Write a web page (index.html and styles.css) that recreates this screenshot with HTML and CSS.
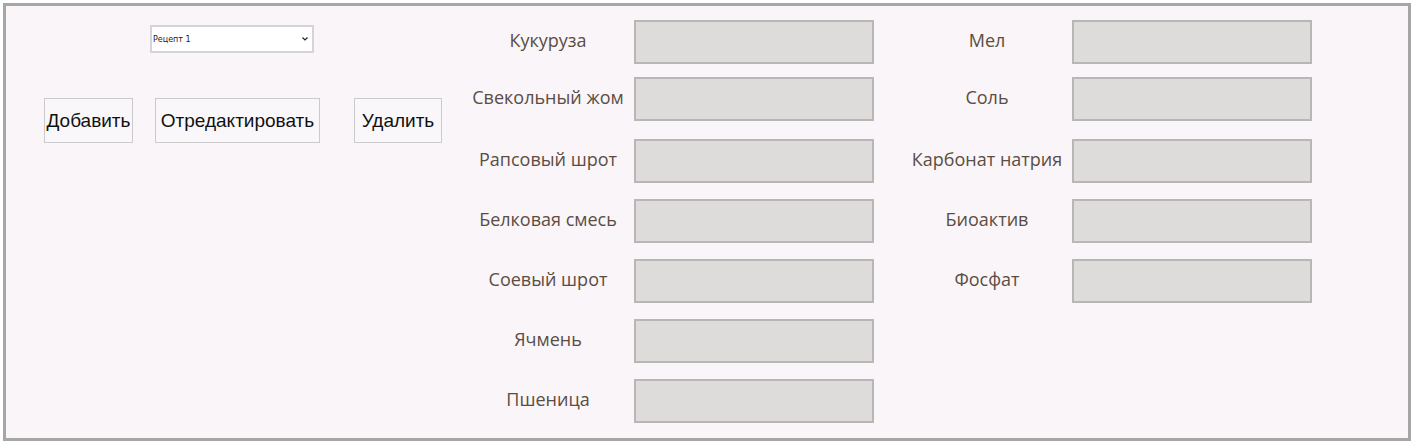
FILE: index.html
```html
<!DOCTYPE html>
<html lang="ru">
<head>
    <meta charset="UTF-8">
    <meta name="viewport" content="width=device-width, initial-scale=1.0">
    <title>Рецепты</title>
    <link rel="stylesheet" href="styles.css">
</head>
<body>
    <div class="window">
        <!-- Recipe picker and actions -->
        <div class="side">
            <div class="recipe-select">
                <span>Рецепт 1</span>
                <svg width="6" height="4" viewBox="0 0 6 4"><path d="M0.5 0.5 L3 3 L5.5 0.5" fill="none" stroke="#222" stroke-width="1.2"/></svg>
            </div>
            <div class="actions">
                <button class="btn btn-add">Добавить</button>
                <button class="btn btn-edit">Отредактировать</button>
                <button class="btn btn-delete">Удалить</button>
            </div>
        </div>

        <!-- Ingredients, first column -->
        <div class="fields fields-left">
            <div class="field"><label>Кукуруза</label><div class="box"></div></div>
            <div class="field field-2"><label>Свекольный жом</label><div class="box"></div></div>
            <div class="field field-3"><label>Рапсовый шрот</label><div class="box"></div></div>
            <div class="field"><label>Белковая смесь</label><div class="box"></div></div>
            <div class="field"><label>Соевый шрот</label><div class="box"></div></div>
            <div class="field"><label>Ячмень</label><div class="box"></div></div>
            <div class="field"><label>Пшеница</label><div class="box"></div></div>
        </div>

        <!-- Ingredients, second column -->
        <div class="fields fields-right">
            <div class="field"><label>Мел</label><div class="box"></div></div>
            <div class="field field-2"><label>Соль</label><div class="box"></div></div>
            <div class="field field-3"><label>Карбонат натрия</label><div class="box"></div></div>
            <div class="field"><label>Биоактив</label><div class="box"></div></div>
            <div class="field"><label>Фосфат</label><div class="box"></div></div>
        </div>
    </div>
</body>
</html>
```

FILE: styles.css
```css
/* Global */
body {
    margin: 0;
    padding: 3px;
    background: #ffffff;
    font-family: 'Open Sans', sans-serif;
}

.window {
    height: 418px;
    border: 3px solid #a6a6a6;
    background: #f9f5f9;
    display: flex;
    padding-top: 14px;
}

/* Left panel */
.side {
    width: 464px;
    flex-shrink: 0;
}

.recipe-select {
    margin: 5px 0 0 144px;
    width: 164px;
    height: 28px;
    box-sizing: border-box;
    border: 2px solid #d6d4d6;
    background: #fff;
    display: flex;
    align-items: center;
    justify-content: space-between;
    padding: 0 4px 0 1px;
    font-family: 'DejaVu Sans', sans-serif;
    font-size: 8px;
    color: #1a1a2a;
}

.actions {
    display: flex;
    margin: 45px 0 0 38px;
}

.btn {
    height: 45px;
    border: 1px solid #cccacc;
    background: #faf7fa;
    font-family: 'Liberation Sans', Arial, sans-serif;
    font-size: 19px;
    color: #111;
    padding: 0;
    cursor: pointer;
}

.btn-add {
    width: 89px;
}

.btn-edit {
    width: 165px;
    margin-left: 22px;
}

.btn-delete {
    width: 88px;
    margin-left: 34px;
}

/* Ingredient columns */
.fields {
    display: flex;
    flex-direction: column;
    gap: 16px;
}

.field {
    display: flex;
    align-items: center;
}

.field-2 {
    margin-top: -3px;
}

.field-3 {
    margin-top: 2px;
}

.field label {
    text-align: center;
    font-size: 18px;
    color: #5b4d42;
    line-height: 1;
    padding-bottom: 4px;
}

.box {
    width: 240px;
    height: 44px;
    box-sizing: border-box;
    border: 2px solid #b9b7b5;
    background: #dddcda;
}

.fields-left label {
    width: 156px;
    margin-right: 8px;
}

.fields-right {
    margin-left: 34px;
}

.fields-right label {
    width: 158px;
    margin-right: 6px;
}
```
